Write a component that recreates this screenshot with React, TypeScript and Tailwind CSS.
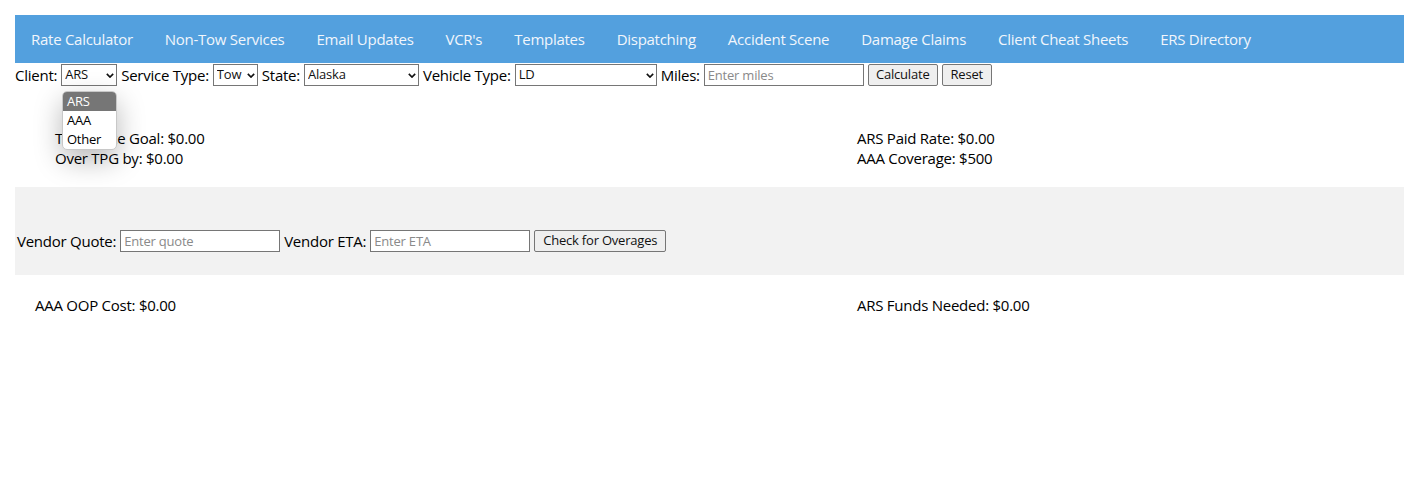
import { useState } from "react";

const navItems = [
  "Rate Calculator",
  "Non-Tow Services",
  "Email Updates",
  "VCR's",
  "Templates",
  "Dispatching",
  "Accident Scene",
  "Damage Claims",
  "Client Cheat Sheets",
  "ERS Directory",
];

const fieldCls =
  "h-[22px] border border-[#767676] bg-white px-[3px] text-[13px] tracking-[-0.2px] text-[#111] outline-none";
const btnCls =
  "h-[22px] rounded-[2px] border border-[#767676] bg-[#efefef] px-0 text-[13px] tracking-[-0.2px] text-[#111]";

function Select({ width, options }: { width: string; options: string[] }) {
  return (
    <span className={`relative inline-flex ${width}`}>
      <select className={`${fieldCls} w-full appearance-none pr-[14px]`}>
        {options.map((o) => (
          <option key={o}>{o}</option>
        ))}
      </select>
      <svg
        viewBox="0 0 10 6"
        className="pointer-events-none absolute right-[3px] top-[9px] h-[5px] w-[8px]"
        fill="none"
        stroke="#111"
        strokeWidth="2"
      >
        <path d="M1 1l4 4 4-4" />
      </svg>
    </span>
  );
}

export default function App() {
  const [miles, setMiles] = useState("");

  return (
    <div
      className="min-h-screen bg-white pl-[15px] pt-[15px] text-[15px] tracking-[-0.25px] text-black"
      style={{ fontFamily: '"Open Sans", sans-serif' }}
    >
      {/* Top nav */}
      <nav className="flex h-[48px] items-center bg-[#53a0de] pt-[1px] tracking-[-0.27px]">
        {navItems.map((item) => (
          <a key={item} href="#" className="px-[16px] text-[#f1f6fc]">
            {item}
          </a>
        ))}
      </nav>

      {/* Rate inputs */}
      <div className="relative flex h-[24px] items-center gap-[4px] whitespace-nowrap">
        <span>Client:</span>
        <Select width="w-[56px]" options={["ARS", "AAA", "Other"]} />
        <span>Service Type:</span>
        <Select width="w-[45px]" options={["Tow"]} />
        <span>State:</span>
        <Select width="w-[115px]" options={["Alaska"]} />
        <span>Vehicle Type:</span>
        <Select width="w-[142px]" options={["LD"]} />
        <span>Miles:</span>
        <input
          value={miles}
          onChange={(e) => setMiles(e.target.value)}
          placeholder="Enter miles"
          className={`${fieldCls} w-[160px] placeholder:text-[#8a8a8a]`}
        />
        <button className={`${btnCls} w-[70px]`}>Calculate</button>
        <button className={`${btnCls} w-[50px]`}>Reset</button>

        {/* open client dropdown */}
        <div className="absolute left-[47px] top-[28px] z-10 w-[55px] overflow-hidden rounded-[5px] border border-[#c8c8c8] bg-white text-[13px] leading-[19px] shadow-[0_10px_28px_rgba(0,0,0,0.28)]">
          <div className="bg-[#767676] pl-[4px] text-white">ARS</div>
          <div className="pl-[4px]">AAA</div>
          <div className="pl-[4px]">Other</div>
        </div>
      </div>

      {/* Targets */}
      <div className="flex pb-[19px] pt-[41px] leading-[20px]">
        <div className="w-[802px] pl-[40px]">
          <div>Total Price Goal: $0.00</div>
          <div>Over TPG by: $0.00</div>
        </div>
        <div className="pl-[40px]">
          <div>ARS Paid Rate: $0.00</div>
          <div>AAA Coverage: $500</div>
        </div>
      </div>

      {/* Vendor check */}
      <div className="flex h-[88px] items-center gap-[4px] whitespace-nowrap bg-[#f2f2f2] pl-[2px] pt-[20px]">
        <span>Vendor Quote:</span>
        <input placeholder="Enter quote" className={`${fieldCls} w-[160px] placeholder:text-[#8a8a8a]`} />
        <span>Vendor ETA:</span>
        <input placeholder="Enter ETA" className={`${fieldCls} w-[160px] placeholder:text-[#8a8a8a]`} />
        <button className={`${btnCls} w-[132px]`}>Check for Overages</button>
      </div>

      {/* Results */}
      <div className="flex pt-[20px] leading-[20px]">
        <div className="w-[802px] pl-[20px]">AAA OOP Cost: $0.00</div>
        <div className="pl-[40px]">ARS Funds Needed: $0.00</div>
      </div>
    </div>
  );
}
